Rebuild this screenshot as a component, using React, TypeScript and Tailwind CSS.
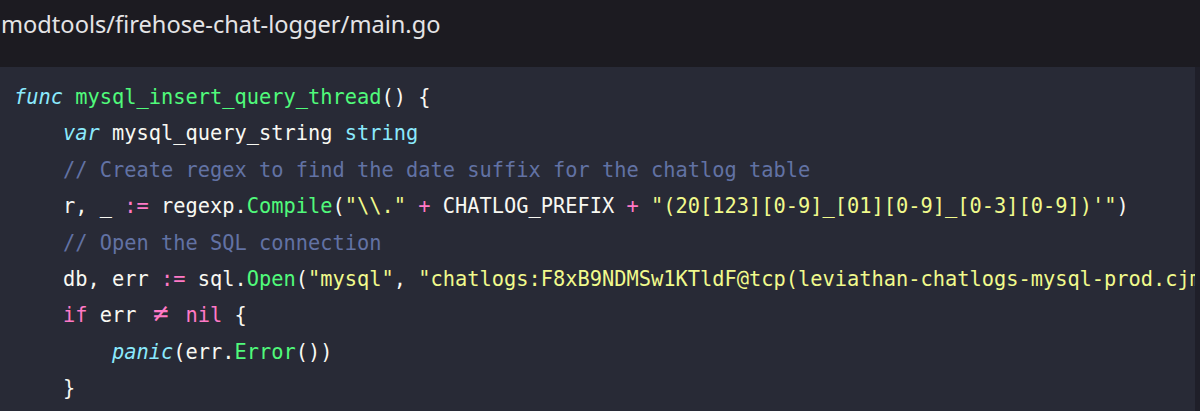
import React from "react";

type Tok = { t: string; c?: string };

const W = "text-[#f8f8f2]";
const K = "text-[#ff79c6]";
const G = "text-[#50fa7b]";
const C = "text-[#8be9fd] italic";
const T = "text-[#8be9fd]";
const S = "text-[#f1fa8c]";
const M = "text-[#6272a4]";

const lines: { indent: number; toks: Tok[] }[] = [
  {
    indent: 0,
    toks: [
      { t: "func", c: C },
      { t: " " },
      { t: "mysql_insert_query_thread", c: G },
      { t: "() {" },
    ],
  },
  {
    indent: 1,
    toks: [
      { t: "var", c: C },
      { t: " mysql_query_string " },
      { t: "string", c: T },
    ],
  },
  {
    indent: 1,
    toks: [{ t: "// Create regex to find the date suffix for the chatlog table", c: M }],
  },
  {
    indent: 1,
    toks: [
      { t: "r, _ " },
      { t: ":=", c: K },
      { t: " regexp." },
      { t: "Compile", c: G },
      { t: "(" },
      { t: '"\\\\."', c: S },
      { t: " " },
      { t: "+", c: K },
      { t: " CHATLOG_PREFIX " },
      { t: "+", c: K },
      { t: " " },
      { t: "\"(20[123][0-9]_[01][0-9]_[0-3][0-9])'\"", c: S },
      { t: ")" },
    ],
  },
  {
    indent: 1,
    toks: [{ t: "// Open the SQL connection", c: M }],
  },
  {
    indent: 1,
    toks: [
      { t: "db, err " },
      { t: ":=", c: K },
      { t: " sql." },
      { t: "Open", c: G },
      { t: "(" },
      { t: '"mysql"', c: S },
      { t: ", " },
      {
        t: '"chatlogs:F8xB9NDMSw1KTldF@tcp(leviathan-chatlogs-mysql-prod.cjm',
        c: S,
      },
    ],
  },
  {
    indent: 1,
    toks: [
      { t: "if", c: K },
      { t: " err " },
      { t: "≠", c: K + " NEQ" },
      { t: " " },
      { t: "nil", c: K },
      { t: " {" },
    ],
  },
  {
    indent: 2,
    toks: [
      { t: "panic", c: C },
      { t: "(err." },
      { t: "Error", c: G },
      { t: "())" },
    ],
  },
  {
    indent: 1,
    toks: [{ t: "}" }],
  },
];

export default function App() {
  return (
    <div className="w-[1200px] h-[411px] overflow-hidden bg-[#1c1b21] flex flex-col">
      <div
        className="h-[67px] shrink-0 flex items-center pl-[1px] text-[23.6px] text-[#e4e4e6] pb-[17px]"
        style={{ fontFamily: '"Noto Sans", "Open Sans", sans-serif' }}
      >
        modtools/firehose-chat-logger/main.go
      </div>
      <div className="flex-1 flex">
        <div
          className="w-[1195px] bg-[#282a36] pt-[12px] pl-[14px] overflow-hidden text-[20.35px] leading-[36.4px] whitespace-pre"
          style={{ fontFamily: '"DejaVu Sans Mono", "Liberation Mono", monospace' }}
        >
          {lines.map((l, i) => (
            <div key={i} className={W}>
              {"    ".repeat(l.indent)}
              {l.toks.map((tk, j) =>
                tk.c && tk.c.includes("NEQ") ? (
                  <span
                    key={j}
                    className="inline-block w-[24.4px] text-center text-[#ff79c6] text-[26px] leading-[20px]"
                  >
                    ≠
                  </span>
                ) : (
                  <span key={j} className={tk.c}>
                    {tk.t}
                  </span>
                )
              )}
            </div>
          ))}
        </div>
        <div className="w-[5px] bg-[#1f1f29]" />
      </div>
    </div>
  );
}
